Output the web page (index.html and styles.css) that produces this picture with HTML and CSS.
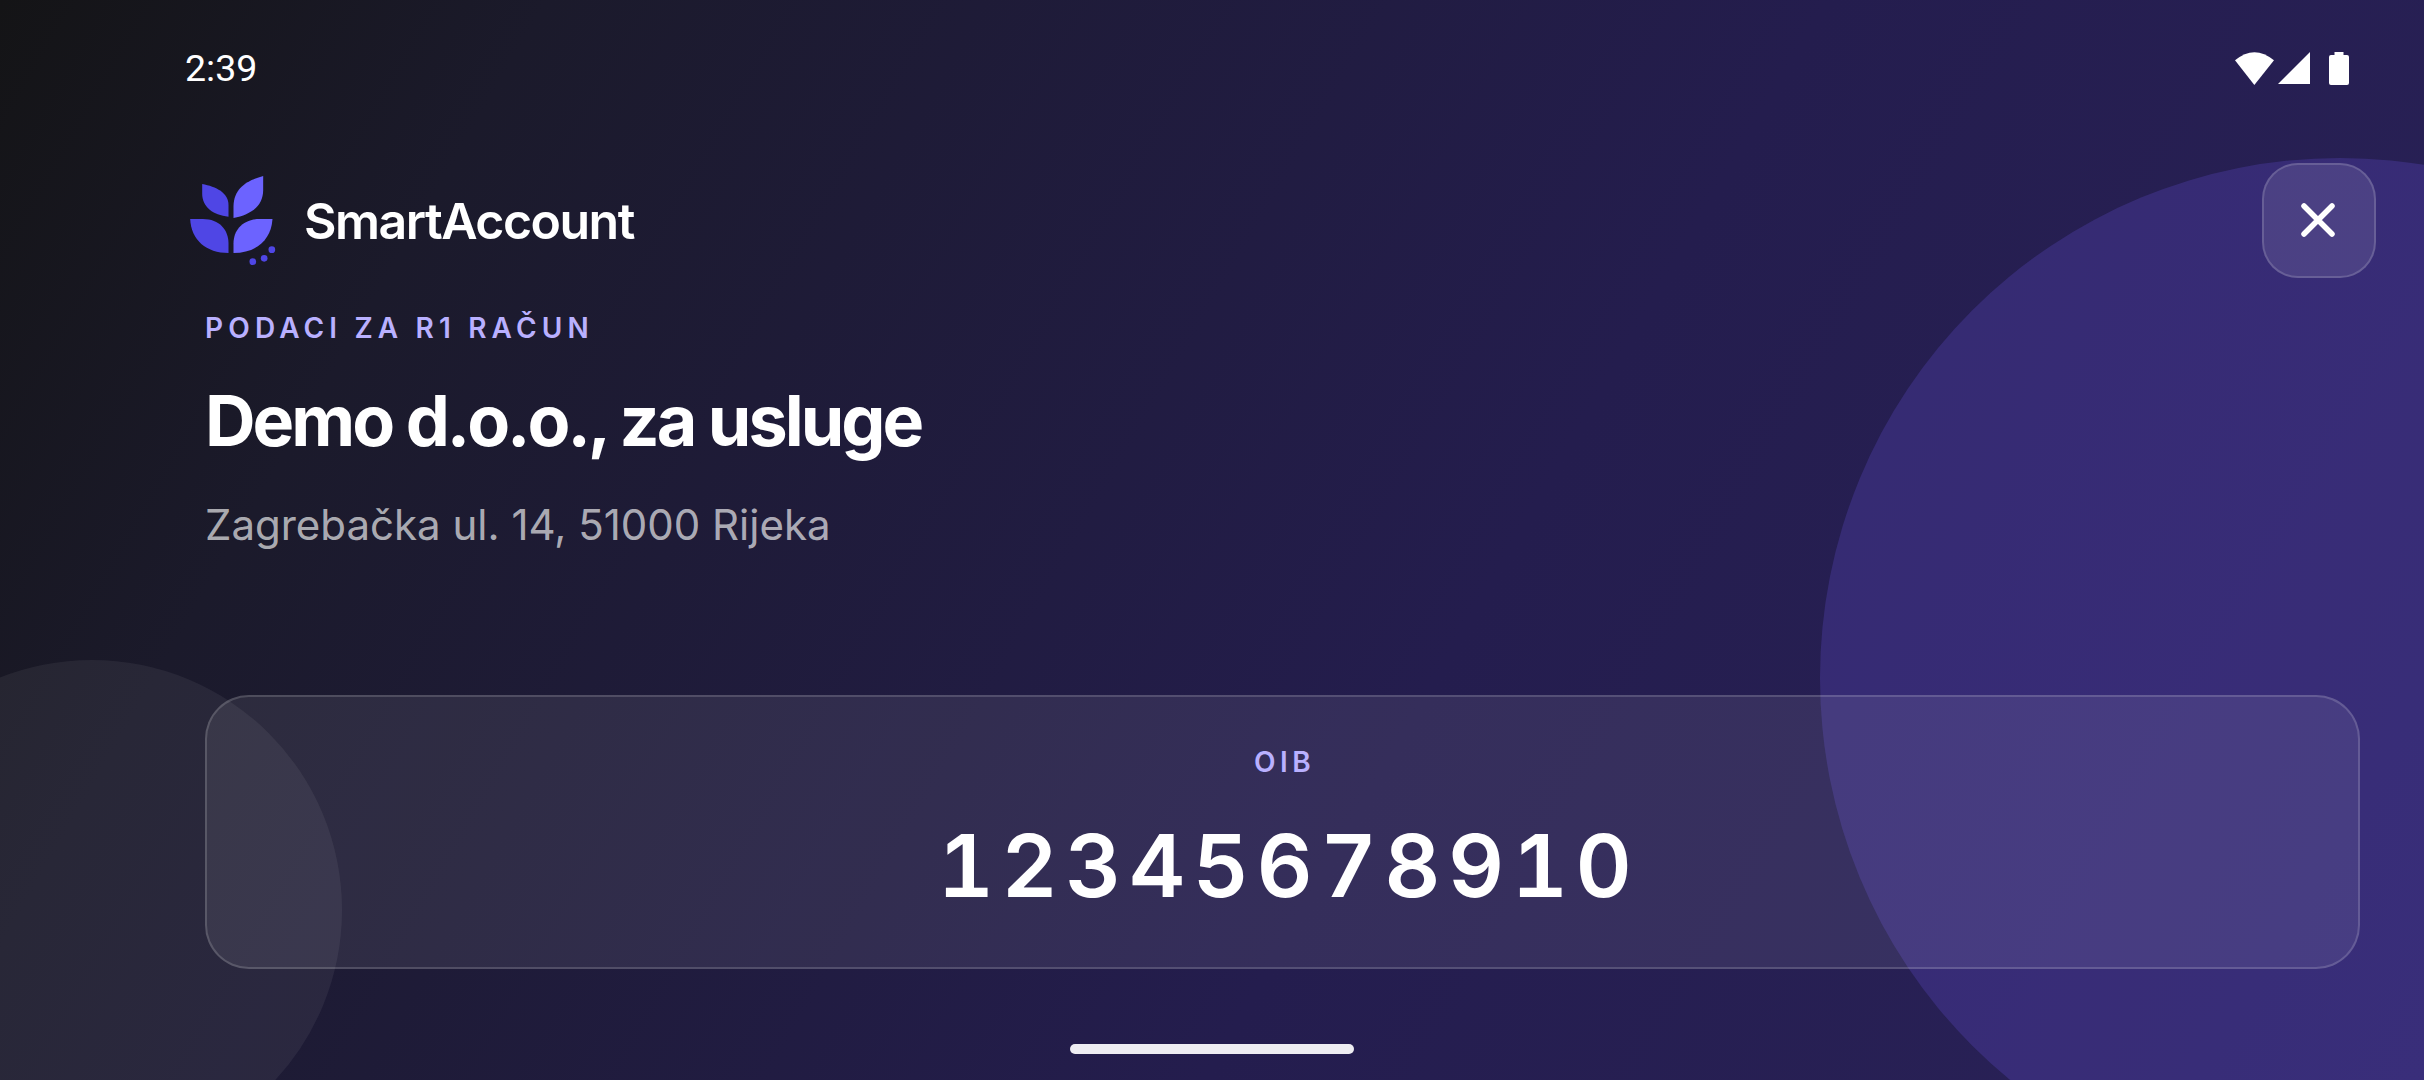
FILE: index.html
```html
<!DOCTYPE html>
<html lang="hr">
<head>
  <meta charset="UTF-8" />
  <title>SmartAccount - R1 račun</title>
  <link rel="stylesheet" href="styles.css">
</head>
<body>
<div class="screen">
  <!-- Background circles -->
  <div class="circle circle-big"></div>
  <div class="circle circle-small"></div>

  <!-- Status bar -->
  <div class="status">
    <span class="time">2:39</span>
    <div class="status-icons">
      <svg class="icon-wifi" width="39" height="33" viewBox="105 62 117 99"><path fill="#fff" d="M105 87Q163 38 222 87L163 161Z"/></svg>
      <svg class="icon-signal" width="32" height="32" viewBox="233 65 96 96"><path fill="#fff" d="M233 161L329 65V161Z"/></svg>
      <svg class="icon-battery" width="20" height="33" viewBox="0 0 20 33"><path fill="#fff" d="M5.500 0h9v3h3.500a2 2 0 0 1 2 2v26a2 2 0 0 1-2 2h-16a2 2 0 0 1-2-2v-26a2 2 0 0 1 2-2h3.500z"/></svg>
    </div>
  </div>

  <!-- Logo and close button -->
  <div class="top-row">
    <div class="brand">
      <svg class="logo" width="86" height="89" viewBox="92 438 257 267">
        <path fill="#4f46e5" d="M128 462C170 470 207 488 207 525V560C160 555 128 532 128 490Z"/>
        <path fill="#6c63ff" d="M311 438V480C311 530 272 555 222 564V530C222 472 268 450 311 438Z"/>
        <path fill="#4f46e5" d="M92 567H130C180 567 207 600 207 640V669C140 669 95 630 92 567Z"/>
        <path fill="#6c63ff" d="M339 567H300C250 567 222 600 222 640V669C290 669 335 630 339 567Z"/>
        <circle fill="#4f46e5" cx="280" cy="695" r="10"/>
        <circle fill="#4f46e5" cx="314" cy="685" r="10"/>
        <circle fill="#4f46e5" cx="337" cy="659" r="10"/>
      </svg>
      <span class="brand-name">SmartAccount</span>
    </div>
    <div class="close-btn">
      <svg width="34" height="34" viewBox="0 0 34 34"><path d="M3 3L31 31M31 3L3 31" stroke="#fff" stroke-width="5.500" stroke-linecap="round"/></svg>
    </div>
  </div>

  <!-- Company info -->
  <div class="company">
    <div class="eyebrow">PODACI ZA R1 RAČUN</div>
    <h1>Demo d.o.o., za usluge</h1>
    <div class="address">Zagrebačka ul. 14, 51000 Rijeka</div>
  </div>

  <!-- OIB card -->
  <div class="oib-card">
    <div class="oib-label">OIB</div>
    <div class="oib-value">12345678910</div>
  </div>

  <div class="home-bar"></div>
</div>
</body>
</html>
```

FILE: styles.css
```css
* {
  box-sizing: border-box;
}

body {
  margin: 0;
  font-family: Inter, "Noto Sans", sans-serif;
  color: #fff;
  background: #1a1a2e;
}

.screen {
  position: relative;
  width: 2424px;
  height: 1080px;
  overflow: hidden;
  display: flex;
  flex-direction: column;
  background: linear-gradient(120deg, #141416 0%, #1b1a2b 18%, #241d4e 60%, #2a2259 100%);
}

.circle {
  position: absolute;
  border-radius: 50%;
}
.circle-big {
  left: 1820px;
  top: 158px;
  width: 1040px;
  height: 1040px;
  background: rgba(122, 94, 254, 0.2);
}
.circle-small {
  left: -158px;
  top: 660px;
  width: 500px;
  height: 500px;
  background: rgba(255, 255, 255, 0.06);
}

/* Status bar */
.status {
  position: relative;
  display: flex;
  justify-content: space-between;
  align-items: center;
  height: 36px;
  margin-top: 50px;
  padding: 0 75px 0 185px;
}
.time {
  font-family: Roboto, sans-serif;
  font-size: 37.5px;
}
.status-icons {
  display: flex;
  align-items: center;
  gap: 4px;
}
.icon-battery {
  margin-left: 15px;
}

/* Logo row */
.top-row {
  position: relative;
  display: flex;
  justify-content: space-between;
  align-items: flex-start;
  margin-top: 77px;
  padding: 0 48px 0 190px;
}
.brand {
  display: flex;
  align-items: center;
  gap: 28px;
  margin-top: 13px;
}
.brand-name {
  font-size: 50px;
  font-weight: 600;
  letter-spacing: -1.5px;
}
.close-btn {
  display: flex;
  align-items: center;
  justify-content: center;
  width: 114px;
  height: 115px;
  padding: 0 3px 2px 0;
  border: 2px solid rgba(255, 255, 255, 0.16);
  border-radius: 36px;
  background: rgba(255, 255, 255, 0.1);
}

/* Company info */
.company {
  position: relative;
  padding-left: 205px;
  margin-top: 33px;
}
.eyebrow {
  font-size: 28px;
  font-weight: 600;
  line-height: 34px;
  letter-spacing: 5.150px;
  color: #b9b0ff;
}
h1 {
  margin: 35px 0 0;
  font-size: 70px;
  font-weight: 700;
  line-height: 82px;
  letter-spacing: -3px;
}
.address {
  margin-top: 38px;
  font-size: 42px;
  line-height: 50px;
  color: rgba(255, 255, 255, 0.65);
}

/* OIB card */
.oib-card {
  position: relative;
  height: 274px;
  margin: 145px 64px 0 205px;
  padding-top: 48px;
  border: 2px solid rgba(255, 255, 255, 0.16);
  border-radius: 44px;
  background: rgba(255, 255, 255, 0.08);
  text-align: center;
}
.oib-label {
  padding-left: 4px;
  font-size: 28px;
  font-weight: 600;
  line-height: 34px;
  letter-spacing: 4.500px;
  color: #b9b0ff;
}
.oib-value {
  margin-top: 36px;
  padding-left: 12px;
  font-size: 87px;
  font-weight: 600;
  line-height: 102px;
  letter-spacing: 7.500px;
  font-variant-numeric: tabular-nums;
}

.home-bar {
  position: absolute;
  left: 1070px;
  top: 1044px;
  width: 284px;
  height: 10px;
  border-radius: 5px;
  background: #eeedf2;
}
```
